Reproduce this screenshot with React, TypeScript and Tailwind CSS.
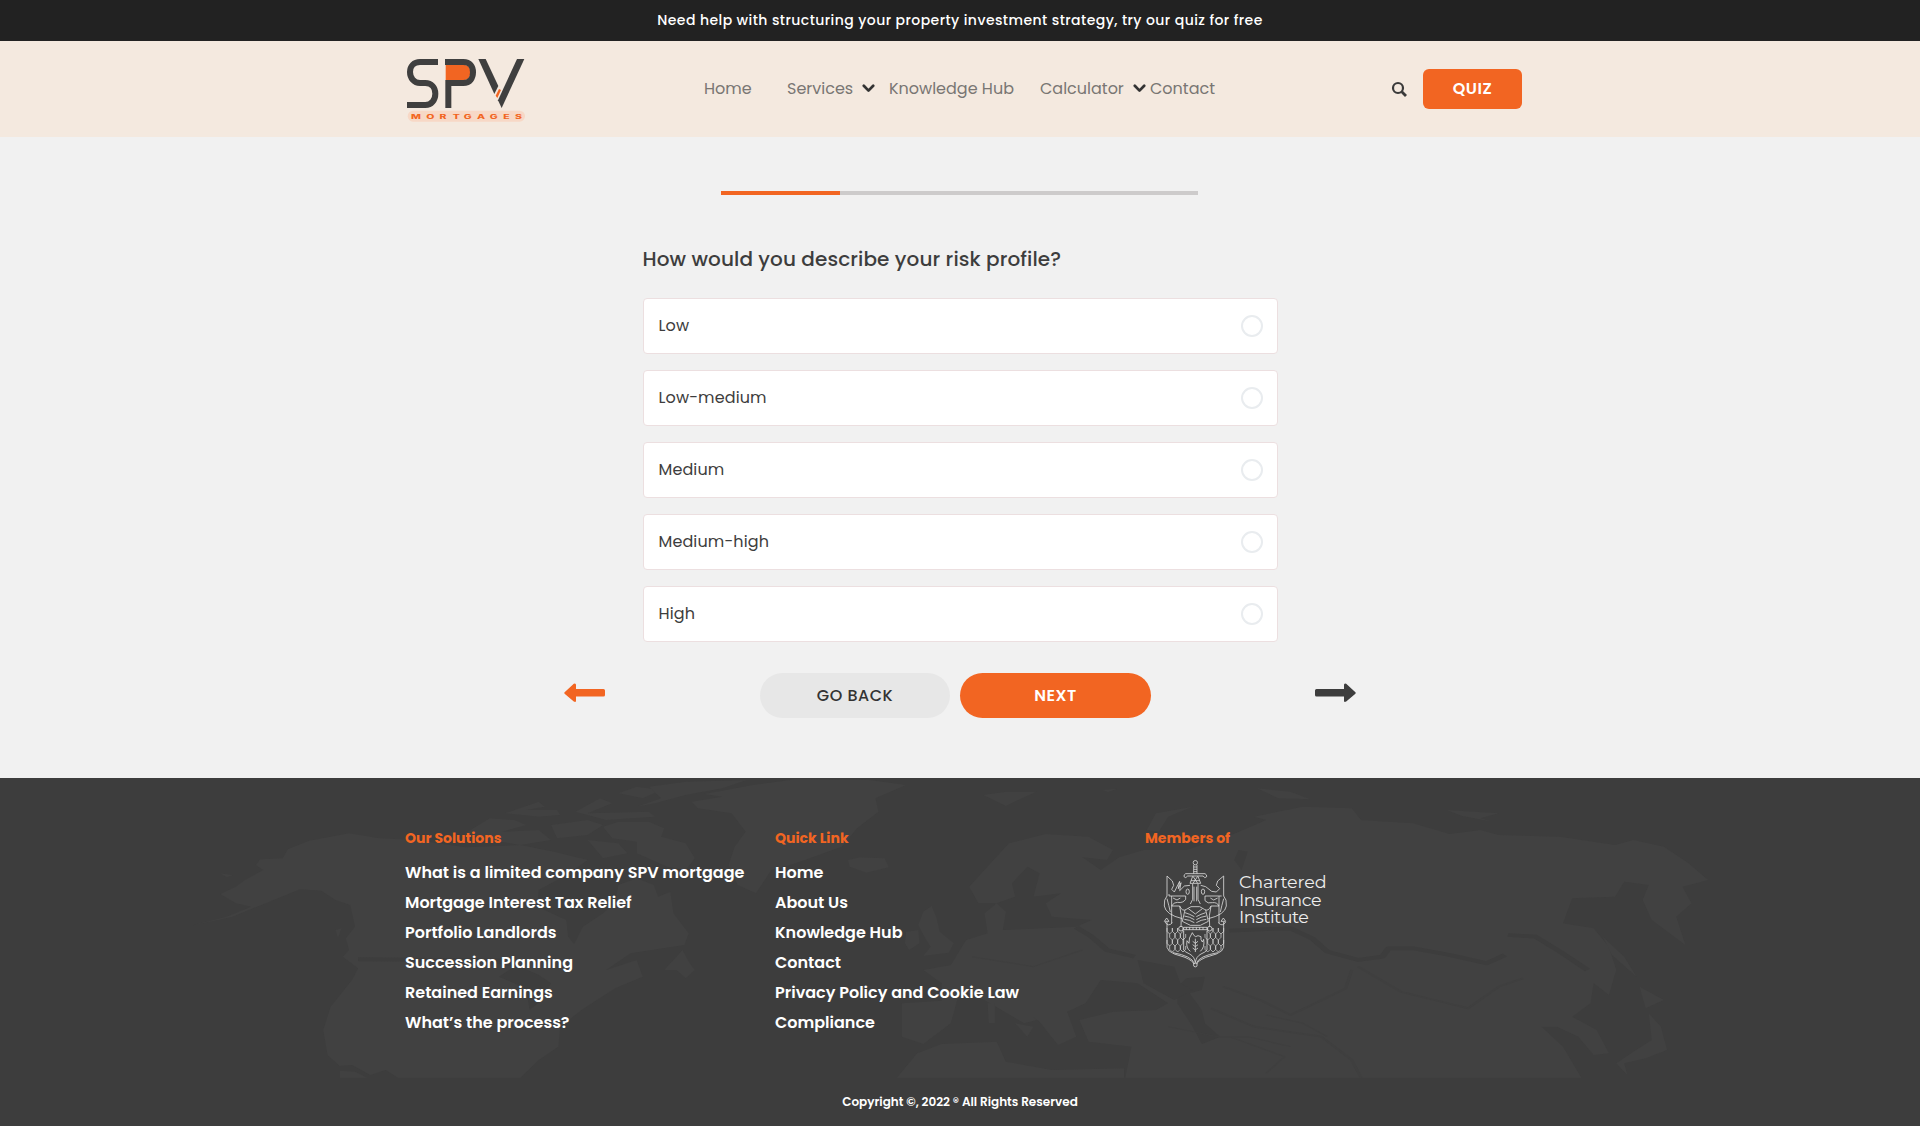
import { useState } from "react";

const OPTIONS = ["Low", "Low-medium", "Medium", "Medium-high", "High"];

const SOLUTIONS = [
  "What is a limited company SPV mortgage",
  "Mortgage Interest Tax Relief",
  "Portfolio Landlords",
  "Succession Planning",
  "Retained Earnings",
  "What’s the process?",
];

const LINKS = ["Home", "About Us", "Knowledge Hub", "Contact", "Privacy Policy and Cookie Law", "Compliance"];

function Logo() {
  return (
    <svg viewBox="48 54 360 198" width="120" height="66" aria-label="SPV Mortgages">
      <path d="M167 75H223C236 75 241 86 241 97S236 120 223 120H167Z" fill="#f26522" />
      <g fill="none" stroke="#3f3f3f" strokeWidth="18">
        <path d="M144 66H90C72 66 60 78 60 96S72 129 90 129H106C124 129 136 142 136 161S124 195 106 195H51" />
        <path d="M165 66H220C240 66 249 80 249 97S240 129 220 129H175V204" />
      </g>
      <path d="M265 57H287L325 138L313 162Z" fill="#3f3f3f" />
      <path d="M381 57H403L335 204L324 181Z" fill="#3f3f3f" />
      <path d="M327 147L333 150L322 174L317 167Z" fill="#f26522" />
      <rect x="53" y="212" width="352" height="33" rx="16" fill="#f7d8c6" />
      <text
        transform="translate(0 236.5) scale(1.75 1)"
        x="36 62 85 107.5 126.5 149 171 194 214.5"
        y="0"
        fontFamily="Inter, sans-serif"
        fontWeight="800"
        fontSize="18"
        fill="#f26522"
      >
        MORTGAGES
      </text>
    </svg>
  );
}

function Chevron() {
  return (
    <svg width="13" height="9" viewBox="0 0 13 9" fill="none" stroke="#333" strokeWidth="2.7" strokeLinecap="round" strokeLinejoin="round">
      <path d="M1.8 1.8L6.5 6.6L11.2 1.8" />
    </svg>
  );
}

function Arrow({ color, flip }: { color: string; flip?: boolean }) {
  return (
    <svg width="42" height="20" viewBox="0 0 42 20" className={flip ? "-scale-x-100" : ""} fill={color}>
      <path d="M0.6 9.3L9.8 0.7Q12 -0.3 12 2V6H39.5Q41 6 41 7.5V12Q41 13.5 39.5 13.5H12V17.5Q12 19.8 9.8 18.6L0.6 10.7Q0 10 0.6 9.3Z" />
    </svg>
  );
}

function Crest() {
  const scales: string[] = [];
  for (let row = 0; row < 4; row++) {
    const y = 324 + row * 18;
    const off = row % 2 ? 8 : 0;
    for (let i = 0; i < 3; i++) {
      const l = 112 + off + i * 16;
      const r = 282 - off - i * 16;
      scales.push(`M${l} ${y}v10l8 8l8 -8v-10`);
      scales.push(`M${r} ${y}v10l-8 8l-8 -8v-10`);
    }
  }
  return (
    <svg width="64" height="109" viewBox="100 117 192 327" fill="none" stroke="#e0e0e0" strokeWidth="2.4">
      <circle cx="197" cy="128" r="6.5" />
      <path d="M192 135V161M202 135V161M192 141h10M192 148h10M192 155h10" />
      <path d="M168 161H226Q232 164 231 170Q226 177 220 168H174Q168 177 163 170Q162 164 168 161Z" />
      <path d="M189 169L181 190H213L205 169M184 182H210M190 169L204 190M204 169L190 190" />
      <path d="M189 192V238L182 252M205 192V238L212 252M193 200V244M201 200V244" />
      <path d="M112 228V168L128 183L132 196L126 208L134 216M282 228V168L264 183L260 196L270 206L260 216L246 214" />
      <path d="M134 216L150 184L146 206L154 188L150 212L164 198L181 196M213 196L228 200L246 214" />
      <ellipse cx="174" cy="215" rx="5" ry="8" />
      <ellipse cx="220" cy="215" rx="5" ry="8" />
      <path d="M118 222V228H168V238Q160 250 144 247Q132 246 126 258M276 228H226V242Q234 252 248 248Q262 246 268 258" />
      <path d="M130 234l12 6 10-6M264 234l-12 6 -10-6" />
      <path d="M126 228V310M268 228V310M112 228Q102 238 104 258Q108 284 158 296M282 228Q292 238 290 258Q286 284 236 296M112 236Q118 258 122 276M282 236Q276 258 272 276" />
      <path d="M126 258H150Q158 276 170 268L184 260H210L224 268Q236 276 244 258H268" />
      <path d="M150 258Q158 286 154 320M244 258Q236 286 240 320M166 270L158 304L182 316H212L236 304L228 270" />
      <path d="M166 278Q180 282 194 290M228 278Q214 282 200 290M164 288Q180 290 194 299M230 288Q214 290 200 299M164 298Q180 299 194 308M230 298Q214 299 200 308M176 266L197 282L218 266" />
      <path d="M111 294L104 304H118ZM281 294L274 304H288ZM106 306Q116 322 128 308M288 306Q278 322 266 308" />
      <path d="M112 306V382Q114 394 134 402L166 412Q192 424 192 432M282 306V382Q280 394 260 402L228 412Q202 424 202 432" />
      <circle cx="154" cy="326" r="7" />
      <circle cx="240" cy="326" r="7" />
      <path d="M162 322H232V329H162ZM170 322v7M180 322v7M190 322v7M200 322v7M210 322v7M220 322v7" />
      <path d="M162 332V390Q166 396 180 402Q195 410 197 428Q199 410 214 402Q228 396 232 390V332" />
      <path d="M182 394Q168 384 172 362L178 370Q176 354 188 338Q192 348 198 350Q204 344 214 350Q212 360 218 366L222 358Q226 382 212 394" />
      <path d="M197 356V396M189 364l8 6 8-6M189 374l8 6 8-6M189 384l8 6 8-6" />
      <path d="M130 398Q186 408 194 430M264 398Q208 408 200 430" />
      <circle cx="197" cy="435" r="5.5" />
      <path d={scales.join("")} strokeWidth="2" />
    </svg>
  );
}

function WorldMap() {
  return (
    <svg className="absolute inset-0" width="1920" height="300" viewBox="0 0 1920 300" fill="#414141">
      <g transform="translate(0 -8) scale(0.6122 0.3333)">
        <path d="M315 466L370 440L410 410L385 400L360 372L385 350L400 330L430 300L418 285L425 268L462 265L470 238L505 212L570 190L620 205L680 210L760 232L850 225L905 245L960 270L925 315L880 360L878 410L925 450L928 500L938 522L952 470L985 430L1005 400L1010 345L1040 325L1068 345L1075 380L1095 365L1100 430L1125 490L1118 525L1065 540L1030 550L990 600L1040 570L1050 620L1005 655L975 690L950 720L915 770L912 830L880 870L850 923H650L630 900L605 915L575 885L555 888L535 855L528 780L540 710L575 630L585 595L560 560L570 540L565 505L580 470L572 405L548 390L525 362L490 358L440 395L380 440Z" />
        <path d="M548 480L558 475L552 505ZM360 310l20 6-10 6zM555 923V902L580 905L600 923ZM1085 600L1115 540L1125 575L1135 600L1120 625L1105 600Z" />
        <path d="M760 190L800 145L840 150L860 165L820 185L880 180L900 210L850 225L800 210ZM825 130L880 95L890 110L860 120L910 120L915 135L880 140ZM940 125L980 85L1000 100L960 130L1060 125L1070 140L990 150ZM985 170L1010 155L1060 155L1085 175L1080 200L1120 220L1135 265L1120 300L1090 290L1040 250L1040 215L1000 205ZM1010 70L1040 50L1080 60L1050 85ZM900 165l60-15 25 15-25 30-50 10zM960 210l50 10 15 30-40 15z" />
        <path d="M1060 50L1120 35L1220 30L1180 55L1120 75L1070 100L1040 110L1080 85ZM1130 95L1180 80L1150 72L1230 45L1300 28L1420 30L1480 45L1430 85L1435 125L1400 175L1375 230L1300 280L1260 300L1235 370L1205 345L1190 285L1200 230L1218 185L1195 130L1140 115Z" />
        <path d="M1385 270L1405 262L1445 265L1452 292L1415 308L1388 290ZM1508 425L1522 408L1530 445L1535 485L1558 520L1550 548L1508 558L1520 530L1510 500L1500 465ZM1478 520L1480 485L1500 480L1502 520L1485 540Z" />
        <path fill="#3d3d3d" d="M585 562L820 566L850 590L880 615L900 640L885 690L865 720L860 660L840 640L815 620L840 590L800 576L585 574Z" />
      </g>
      <g transform="translate(960 -8) scale(0.6122 0.3333)">
        <path d="M-95 700L-30 692L-30 640L-60 600L-15 585L10 510L45 490L40 430L60 400L75 425L70 480L190 470L215 450L150 440L140 400L165 370L120 380L130 310L110 290L85 340L90 380L60 400L30 400L15 350L50 280L80 220L140 192L210 200L250 240L240 270L200 262L230 300L260 262L300 240L370 240L450 190L500 150L480 140L560 110L640 115L655 150L740 160L800 192L850 180L880 195L980 200L1070 225L1100 210L1150 230L1190 280L1222 330L1180 350L1195 400L1170 440L1185 525L1130 450L1115 390L1125 345L1085 335L1070 380L1000 385L985 460L1035 475L1060 530L1072 600L1060 675L1035 640L1030 700L1000 740L1040 780L1060 850L1035 855L1010 800L975 770L950 770L985 830L1015 923H270L280 830L210 815L195 750L250 725L320 720L340 700L290 640L230 630L205 700L175 725L190 800L160 825L130 755L80 690L55 640L125 750L105 760L40 690L0 660L-15 760L-60 822L-95 800Z" />
        <path d="M-103 923L-70 850L-30 822L60 815L75 875L150 900L268 895L268 923Z" />
        <path d="M38 75L75 65L125 65L95 90L75 108ZM232 60l25-4-15 10zM305 180L320 130L380 110L340 140L325 185ZM485 55L540 65L572 88L520 85ZM795 120L880 130L850 145L870 155L820 138ZM1050 500L1085 560L1105 620L1065 555ZM1110 650L1150 690L1120 715ZM1125 730L1145 770L1155 840L1120 865L1085 880L1090 915L1072 880L1100 845L1130 810ZM45 700h12v60h-10zM90 760l30 10-10 30z" />
        <g fill="#3d3d3d">
          <path d="M370 625L400 620L395 660L375 670L395 720L400 760L425 800L395 822L380 770L355 700L355 650ZM455 240L470 245L460 300L448 270Z" />
          <path d="M290 570L350 590L360 640L380 660L350 690L300 640Z" />
        </g>
        <g fill="none" stroke="#3d3d3d" strokeLinejoin="round">
          <path strokeWidth="11" d="M190 472L215 500L240 540L285 560M440 482L490 478L540 475L575 505L600 545L650 570L690 560L700 535L740 535L800 555L860 580L890 555M895 495L940 500L980 545L1025 600" />
          <path stroke="#3f3f3f" strokeWidth="5" d="M430 650L490 690L540 735L580 700L630 655L640 600M650 590L720 665L830 715L880 650L920 625M410 715L480 770L590 800L640 870L655 923" />
          <path stroke="#3f3f3f" strokeWidth="3" d="M340 770L420 800L470 800L540 830M20 560L120 590L200 540M600 800L560 760L500 735M440 800L530 860L500 910" />
        </g>
      </g>
    </svg>
  );
}

export default function App() {
  const [selected, setSelected] = useState<string | null>(null);
  return (
    <div className="flex h-[1126px] w-[1920px] flex-col overflow-hidden bg-[#f1f1f1] font-['Poppins','Inter',sans-serif] text-[#3d3d3d]">
      <div className="flex h-[41px] shrink-0 items-center justify-center bg-[#222] pb-[2px] text-sm font-medium tracking-[0.43px] text-white">
        Need help with structuring your property investment strategy, try our quiz for free
      </div>

      <header className="flex h-24 shrink-0 bg-[#f4e9df] pl-[406px]">
        <a className="w-[298px] pt-[17px]">
          <Logo />
        </a>
        <nav className="flex h-[95px] items-center text-base text-[#797673]">
          <a className="w-[83px]">Home</a>
          <a className="w-[75px]">Services</a>
          <span className="w-[27px]"><Chevron /></span>
          <a className="w-[151px]">Knowledge Hub</a>
          <a className="w-[93px]">Calculator</a>
          <span className="w-[17px]"><Chevron /></span>
          <a className="w-[241px]">Contact</a>
        </nav>
        <div className="flex h-24 items-center">
          <svg width="17" height="17" viewBox="0 0 17 17" className="mr-[15px]" fill="none" stroke="#3a3a3a">
            <circle cx="7" cy="7" r="5" strokeWidth="2.2" />
            <path d="M10.8 10.8L15 15" strokeWidth="2.8" />
          </svg>
          <button className="h-10 w-[99px] rounded-md bg-[#f26522] text-base font-semibold tracking-[0.5px] text-white">QUIZ</button>
        </div>
      </header>

      <main className="flex h-[641px] shrink-0 flex-col items-center">
        <div className="mt-[54px] mr-px h-1 w-[477px] bg-[#cdcbcb]">
          <div className="h-full w-1/4 bg-[#f26522]" />
        </div>
        <section className="mt-[49px] w-[635px]">
          <h1 className="text-xl leading-[30px] font-medium tracking-[0.1px]">How would you describe your risk profile?</h1>
          <div className="mt-6 flex flex-col gap-4">
            {OPTIONS.map((label) => (
              <button
                key={label}
                onClick={() => setSelected(label)}
                className="flex h-14 items-center justify-between rounded border border-[#ecdfe0] bg-white pr-[14px] pl-[15px] text-left text-base tracking-[0.12px]"
              >
                {label}
                <span className={selected === label ? "size-[22px] rounded-full border-2 border-[#f26522]" : "size-[22px] rounded-full border-2 border-[#e9ecef]"} />
              </button>
            ))}
          </div>
        </section>
        <div className="mt-[31px] flex w-[792px] items-start">
          <button className="mt-[10px] w-[196px]"><Arrow color="#f26522" /></button>
          <button className="h-[45px] w-[190px] rounded-[23px] bg-[#e7e7e7] text-base font-medium tracking-[0.5px] text-[#333]">GO BACK</button>
          <button className="ml-[10px] h-[45px] w-[191px] rounded-[23px] bg-[#f26522] text-base font-semibold tracking-[0.5px] text-white">NEXT</button>
          <button className="mt-[10px] ml-auto"><Arrow color="#3d3d3d" flip /></button>
        </div>
      </main>

      <footer className="relative h-[348px] shrink-0 bg-[#3d3d3d] text-white">
        <WorldMap />
        <div className="relative flex h-[310px] pt-[50px] pl-[405px]">
          <div className="w-[370px]">
            <h2 className="h-[30px] text-sm leading-5 font-bold text-[#f26522]">Our Solutions</h2>
            <ul className="text-base leading-[30px] font-semibold whitespace-nowrap">
              {SOLUTIONS.map((l) => (
                <li key={l}>{l}</li>
              ))}
            </ul>
          </div>
          <div className="w-[370px]">
            <h2 className="h-[30px] text-sm leading-5 font-bold text-[#f26522]">Quick Link</h2>
            <ul className="text-base leading-[30px] font-semibold whitespace-nowrap">
              {LINKS.map((l) => (
                <li key={l}>{l}</li>
              ))}
            </ul>
          </div>
          <div>
            <h2 className="h-[31px] text-sm leading-5 font-bold text-[#f26522]">Members of</h2>
            <div className="flex pl-[18px]">
              <Crest />
              <div className="ml-3 pt-[14px] font-['Montserrat','Lato',sans-serif] text-[17.5px] leading-[17.7px] font-normal text-[#ededed]">
                <p className="tracking-[-0.1px]">Chartered</p>
                <p className="tracking-[-0.45px]">Insurance</p>
                <p className="tracking-[-0.45px]">Institute</p>
              </div>
            </div>
          </div>
        </div>
        <p className="relative mt-[5px] text-center text-xs leading-[18px] font-semibold">Copyright ©, 2022 ® All Rights Reserved</p>
      </footer>
    </div>
  );
}
